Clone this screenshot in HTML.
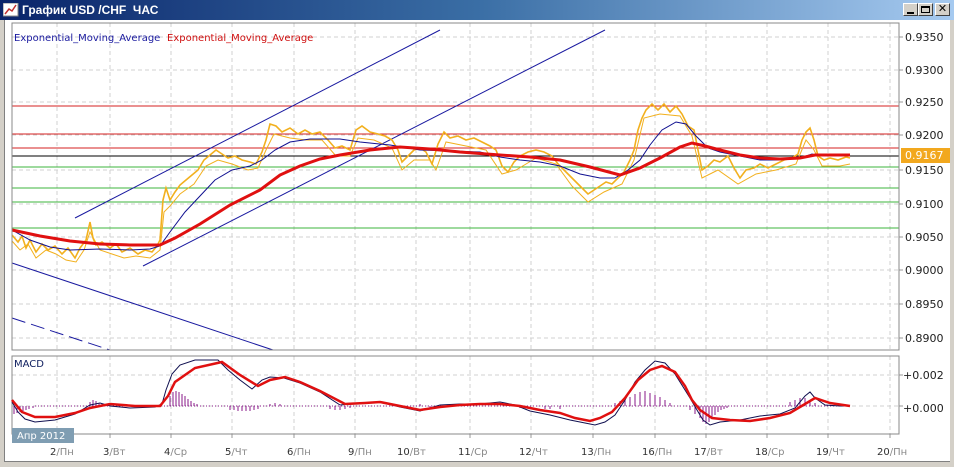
<!DOCTYPE html>
<html><head><meta charset="utf-8"><style>
body{margin:0;width:954px;height:467px;overflow:hidden;background:#fff;font-family:"Liberation Sans","DejaVu Sans",sans-serif;position:relative}
.title{position:absolute;left:0;top:0;width:954px;height:20px;background:linear-gradient(90deg,#0a246a 0%,#3a6ea5 50%,#a6caf0 100%);}
.title span{position:absolute;left:22px;top:3px;color:#fff;font-weight:bold;font-size:12px}
.btn{position:absolute;top:3px;width:15px;height:13px;background:#d4d0c8;border:1px solid;border-color:#fff #404040 #404040 #fff;box-sizing:border-box}
.frame{position:absolute;left:0;top:20px;width:954px;height:447px;border-left:4px solid #d4d0c8;border-right:4px solid #d4d0c8;border-bottom:5px solid #d4d0c8;box-sizing:border-box}
</style></head><body>
<div class="title"><svg width="16" height="14" style="position:absolute;left:3px;top:3px"><rect x="0" y="0" width="15" height="13" fill="#fff" stroke="#888"/><polyline points="2,11 6,6 9,8 13,2" fill="none" stroke="#c03030" stroke-width="1.5"/></svg><span>График USD /CHF&nbsp; ЧАС</span>
<div class="btn" style="left:903px"><div style="position:absolute;left:3px;top:8px;width:7px;height:2px;background:#000"></div></div>
<div class="btn" style="left:918px"><div style="position:absolute;left:2px;top:2px;width:9px;height:7px;border:1px solid #000;border-top-width:2px;box-sizing:border-box"></div></div>
<div class="btn" style="left:935px;font-size:11px;font-weight:bold;text-align:center;line-height:11px">✕</div>
</div>
<div class="frame"></div>
<div style="position:absolute;left:4px;top:20px;width:1px;height:442px;background:#808080"></div>
<div style="position:absolute;left:4px;top:461px;width:946px;height:1px;background:#808080"></div>
<svg width="954" height="467" style="position:absolute;left:0;top:0" font-family="DejaVu Sans, sans-serif">
<g stroke="#d0d0d0" stroke-dasharray="4,3" stroke-width="1">
<path d="M57 23V350M110 23V350M171 23V350M232 23V350M294 23V350M355 23V350M416 23V350M470 23V350M531 23V350M593 23V350M655 23V350M706 23V350M767 23V350M828 23V350M890 23V350"/>
<path d="M57 356V434M110 356V434M171 356V434M232 356V434M294 356V434M355 356V434M416 356V434M470 356V434M531 356V434M593 356V434M655 356V434M706 356V434M767 356V434M828 356V434M890 356V434"/>
<path d="M12 37H899M12 70H899M12 102H899M12 135H899M12 170H899M12 204H899M12 237H899M12 270H899M12 304H899M12 338H899M12 375H899M12 406H899"/>
</g>
<g stroke="#989898" stroke-width="1"><path d="M57 434v4M110 434v4M171 434v4M232 434v4M294 434v4M355 434v4M416 434v4M470 434v4M531 434v4M593 434v4M655 434v4M706 434v4M767 434v4M828 434v4M890 434v4M899 37h4M899 70h4M899 102h4M899 135h4M899 170h4M899 204h4M899 237h4M899 270h4M899 304h4M899 338h4M899 375h4M899 406h4"/></g>
<g stroke-width="1"><path d="M12 106H899M12 134H899M12 148H899" stroke="#d42020"/><path d="M12 156H899" stroke="#000"/><path d="M12 167H899M12 188H899M12 202H899M12 228H899" stroke="#3cb43c"/></g>
<g stroke="#1a1aa0" stroke-width="1" fill="none"><path d="M75 218L440 30M143 266L605 30M12 263L273 350"/><path d="M12 318L110 350" stroke-dasharray="14,6"/></g>
<g fill="none" stroke="#f2b01e" stroke-width="1.6">
<polyline points="12,235 18,242 22,236 26,248 30,240 36,252 42,244 48,250 55,246 62,254 68,248 75,258 80,248 86,240 90,222 93,238 96,245 102,242 110,248 116,244 122,252 130,248 138,254 145,250 152,252 157,246 160,240 163,200 166,188 170,200 175,192 180,185 186,180 192,175 198,170 204,160 210,155 216,150 222,154 228,158 235,156 242,160 250,162 256,164 262,152 266,140 270,124 276,126 282,132 290,128 298,134 305,130 312,134 320,132 328,140 335,148 342,146 350,150 356,130 362,126 370,132 378,134 385,136 392,140 398,150 402,162 408,156 414,150 420,148 426,152 432,164 438,144 444,132 450,138 458,136 466,140 474,138 482,142 490,146 496,150 502,166 508,172 514,162 520,156 528,152 536,150 544,152 552,156 558,164 564,170 570,176 576,182 582,188 588,194 594,190 600,186 606,182 612,184 618,178 624,172 630,160 634,150 638,130 642,118 646,110 652,104 658,110 664,104 670,112 676,106 682,114 688,126 694,130 698,150 702,170 708,166 714,160 720,162 728,156 734,168 740,178 746,170 754,168 760,164 768,168 776,164 784,160 792,158 798,154 802,140 806,132 810,128 814,140 818,156 824,160 830,158 838,160 846,157 850,158"/>
<polyline stroke-width="1" points="12,241 20,250 28,244 36,258 46,250 56,254 66,260 76,262 84,250 90,232 100,250 112,254 124,258 136,256 150,258 160,250 164,212 170,206 180,194 194,184 206,166 218,160 232,164 248,170 258,168 266,150 274,134 290,138 306,140 322,140 336,156 350,156 358,138 374,140 392,148 402,170 414,160 430,160 436,170 446,142 466,146 486,150 502,174 516,170 536,158 556,164 572,186 588,202 604,192 622,184 634,160 644,118 660,114 680,116 692,136 702,178 718,170 738,184 756,174 776,170 796,164 806,140 814,150 822,166 840,166 850,164"/>
</g>
<polyline fill="none" stroke="#101090" stroke-width="1" points="12,230 30,240 50,247 70,250 100,249 130,250 150,249 160,246 170,232 185,212 200,196 215,180 232,170 250,166 262,160 275,150 290,142 310,139 340,139 360,142 390,145 420,150 450,151 480,152 500,157 520,160 540,162 560,166 580,174 600,178 615,178 628,170 640,160 650,145 662,130 676,122 686,124 696,136 708,148 720,152 740,156 760,160 780,160 800,158 812,154 820,156 835,156 850,156"/>
<polyline fill="none" stroke="#e01010" stroke-width="3" points="12,230 40,236 70,241 100,244 130,245 160,245 175,238 200,224 230,205 260,190 280,175 300,166 320,159 340,155 370,150 400,147 430,149 460,152 500,155 530,157 560,160 590,167 620,175 640,168 660,158 680,147 692,143 705,146 720,150 740,155 760,158 780,159 800,158 815,155 830,155 850,155"/>
<text x="14" y="41" font-size="10" fill="#1a1aa0">Exponential_Moving_Average</text>
<text x="167" y="41" font-size="10" fill="#d01010">Exponential_Moving_Average</text>
<rect x="12" y="23" width="887" height="327" fill="none" stroke="#888"/>
<rect x="12" y="356" width="887" height="78" fill="none" stroke="#888"/>
<text x="14" y="367" font-size="10" fill="#102060">MACD</text>
<g stroke="#8a1a8a" stroke-width="1">
<path d="M14 406v8M17 406v7M20 406v6M23 406v5M26 406v4M29 406v3M33 406v2M90 406v-4M93 406v-6M96 406v-5M99 406v-3M102 406v-2M170 406v-10M173 406v-14M176 406v-15M179 406v-14M182 406v-12M185 406v-10M188 406v-7M191 406v-5M194 406v-3M197 406v-2M230 406v4M234 406v4M238 406v5M242 406v5M246 406v5M250 406v5M254 406v4M258 406v3M270 406v-2M275 406v-3M280 406v-2M330 406v3M335 406v4M340 406v4M345 406v3M350 406v2M420 406v-2M430 406v2M440 406v2M520 406v2M545 406v3M550 406v3M560 406v3M615 406v-3M620 406v-5M625 406v-7M630 406v-9M635 406v-12M640 406v-14M645 406v-15M650 406v-13M655 406v-11M660 406v-9M665 406v-6M670 406v-3M690 406v4M695 406v8M700 406v12M703 406v16M706 406v18M709 406v16M712 406v12M715 406v9M718 406v6M721 406v4M724 406v3M727 406v2M790 406v-4M795 406v-6M800 406v-8M805 406v-8M810 406v-6M815 406v-3"/>
<path d="M35 406H850" stroke-dasharray="1,2"/></g>
<polyline fill="none" stroke="#101050" stroke-width="1" points="12,402 18,412 25,419 35,422 55,420 75,414 90,405 100,403 110,406 130,408 155,407 162,404 166,390 172,374 180,365 195,360 218,360 228,370 240,380 252,389 262,380 270,377 284,378 300,383 320,392 340,405 360,403 380,402 400,407 420,411 440,405 460,404 480,404 500,402 515,405 530,411 550,415 570,420 585,423 595,425 605,422 615,415 625,400 635,382 645,370 655,361 665,363 675,374 685,390 690,398 697,410 703,420 710,425 720,422 740,420 760,416 780,414 795,408 805,396 810,392 815,398 825,405 840,406 850,406"/>
<polyline fill="none" stroke="#e01010" stroke-width="2.5" points="12,400 22,412 35,417 55,417 75,413 90,408 110,404 135,406 160,406 168,396 175,382 195,368 222,362 240,375 258,386 270,380 285,377 300,382 320,391 345,404 365,403 380,402 400,406 420,410 440,407 460,405 480,404 500,404 520,406 540,410 560,413 575,418 590,421 600,418 612,412 625,398 638,380 650,370 662,366 675,372 685,386 692,400 700,410 712,418 730,420 750,421 770,418 790,413 805,404 815,398 830,403 850,406"/>
<rect x="12" y="428" width="62" height="15" fill="#7f9db2"/>
<text x="17" y="439" font-size="10" fill="#fff">Апр 2012</text>
<g font-size="11" fill="#202020">
<text x="905" y="41">0.9350</text><text x="905" y="74">0.9300</text><text x="905" y="106">0.9250</text><text x="905" y="139">0.9200</text><text x="905" y="174">0.9150</text><text x="905" y="208">0.9100</text><text x="905" y="241">0.9050</text><text x="905" y="274">0.9000</text><text x="905" y="308">0.8950</text><text x="905" y="342">0.8900</text>
<text x="903" y="379">+0.002</text><text x="903" y="412">+0.000</text></g>
<rect x="901" y="148" width="49" height="15" fill="#f2a81e"/>
<text x="905" y="159" font-size="11" fill="#fff">0.9167</text>
<g font-size="10" fill="#303030">
<text x="50" y="455">2<tspan fill="#888">/Пн</tspan></text>
<text x="103" y="455">3<tspan fill="#888">/Вт</tspan></text>
<text x="164" y="455">4<tspan fill="#888">/Ср</tspan></text>
<text x="225" y="455">5<tspan fill="#888">/Чт</tspan></text>
<text x="287" y="455">6<tspan fill="#888">/Пн</tspan></text>
<text x="348" y="455">9<tspan fill="#888">/Пн</tspan></text>
<text x="397" y="455">10<tspan fill="#888">/Вт</tspan></text>
<text x="458" y="455">11<tspan fill="#888">/Ср</tspan></text>
<text x="519" y="455">12<tspan fill="#888">/Чт</tspan></text>
<text x="581" y="455">13<tspan fill="#888">/Пн</tspan></text>
<text x="642" y="455">16<tspan fill="#888">/Пн</tspan></text>
<text x="694" y="455">17<tspan fill="#888">/Вт</tspan></text>
<text x="755" y="455">18<tspan fill="#888">/Ср</tspan></text>
<text x="816" y="455">19<tspan fill="#888">/Чт</tspan></text>
<text x="877" y="455">20<tspan fill="#888">/Пн</tspan></text>
</g>
</svg>
</body></html>
